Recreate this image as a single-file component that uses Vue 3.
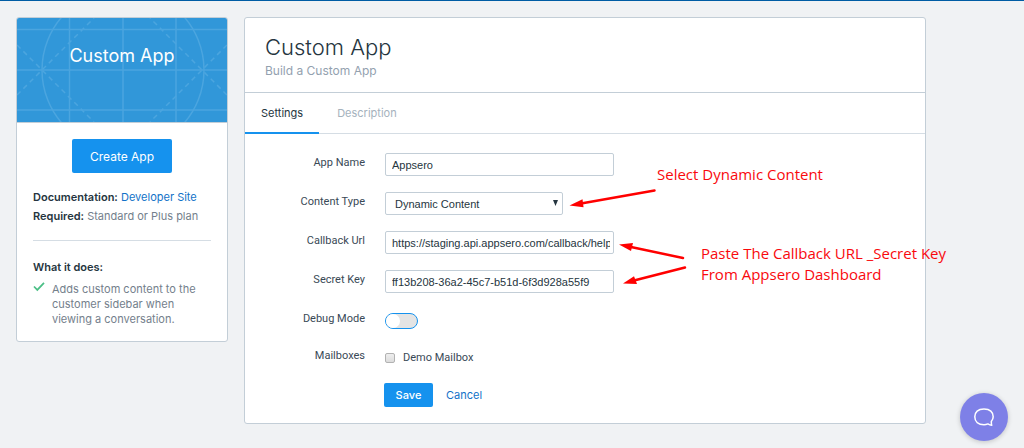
<script setup>
import { ref } from 'vue'

const appName = ref('Appsero')
const contentType = ref('Dynamic Content')
const callbackUrl = ref('https://staging.api.appsero.com/callback/helpscout')
const secretKey = ref('ff13b208-36a2-45c7-b51d-6f3d928a55f9')
const debug = ref(false)
const demoMailbox = ref(false)
</script>

<template>
  <div class="page">
    <aside class="card side">
      <div class="banner">
        <svg class="pattern" viewBox="0 0 210 104" preserveAspectRatio="xMidYMid slice" aria-hidden="true">
          <g fill="none" stroke="#4ba5df" stroke-width="1.5">
            <path d="M0 11.500H210M0 52H210M0 92H210M52.500 0V104M106 0V104M159 0V104" />
            <circle cx="106" cy="52" r="81" />
            <g stroke-dasharray="5 4">
              <path d="M0 27L77 104M0 77L77 0M210 27L133 104M210 77L133 0" />
            </g>
          </g>
        </svg>
        <h2>Custom App</h2>
      </div>
      <div class="side-body">
        <button type="button" class="btn create">Create App</button>
        <p class="meta"><b>Documentation:</b> <a href="#docs">Developer Site</a></p>
        <p class="meta"><b>Required:</b> Standard or Plus plan</p>
        <hr />
        <h3>What it does:</h3>
        <ul>
          <li>
            <svg width="12" height="10" viewBox="0 0 12 10" aria-hidden="true">
              <path d="M1 4.500L4.300 7.900L11 0.800" fill="none" stroke="#4bbf86" stroke-width="1.700" />
            </svg>
            <span>Adds custom content to the customer sidebar when viewing a conversation.</span>
          </li>
        </ul>
      </div>
    </aside>

    <main class="card main">
      <header>
        <h1>Custom App</h1>
        <p>Build a Custom App</p>
      </header>
      <nav class="tabs">
        <a href="#settings" class="tab active">Settings</a>
        <a href="#description" class="tab">Description</a>
      </nav>
      <form @submit.prevent>
        <div class="row">
          <label for="name">App Name</label>
          <input id="name" v-model="appName" class="field" type="text" />
        </div>
        <div class="row">
          <label for="type">Content Type</label>
          <div class="select">
            <select id="type" v-model="contentType" class="field">
              <option>Dynamic Content</option>
              <option>Static Content</option>
            </select>
            <svg class="caret" width="5" height="6" viewBox="0 0 5 6" aria-hidden="true">
              <path d="M0 0H5L2.500 6Z" fill="#253540" />
            </svg>
          </div>
        </div>
        <div class="row">
          <label for="url">Callback Url</label>
          <input id="url" v-model="callbackUrl" class="field" type="text" />
        </div>
        <div class="row">
          <label for="key">Secret Key</label>
          <input id="key" v-model="secretKey" class="field" type="text" />
        </div>
        <div class="row">
          <label for="debug">Debug Mode</label>
          <input id="debug" v-model="debug" class="toggle" type="checkbox" />
        </div>
        <div class="row mailboxes">
          <span class="label">Mailboxes</span>
          <label class="option"><input v-model="demoMailbox" type="checkbox" />Demo Mailbox</label>
        </div>
        <div class="actions">
          <button type="submit" class="btn save">Save</button>
          <a href="#cancel">Cancel</a>
        </div>
      </form>

      <svg class="arrows" width="210" height="110" viewBox="480 185 210 110" aria-hidden="true">
        <g stroke="#f00" stroke-width="2.500" stroke-linecap="round">
          <path d="M654.500 190.500L581 203.500" />
          <path d="M683 258L631 247" />
          <path d="M685 267.500L634 280.500" />
        </g>
        <g fill="#f00">
          <path d="M569.500 205.500L582.500 199.200L583.500 207.300Z" />
          <path d="M619 244.500L633 243L631 251Z" />
          <path d="M623 283.500L634 276.300L637 284Z" />
        </g>
      </svg>
      <p class="note note-type">Select Dynamic Content</p>
      <p class="note note-keys">Paste The Callback URL _Secret Key<br />From Appsero Dashboard</p>
    </main>

    <button type="button" class="chat" aria-label="Open chat">
      <svg width="22" height="22" viewBox="0 0 22 22" aria-hidden="true">
        <path d="M18.800 19.300C18.300 18.500 18.300 17 18.300 15.500C19.600 14 20.200 12.300 20.200 10.800C20.200 5.900 17 3 11 3S1.800 5.900 1.800 10.800S5.300 18.700 11 18.700C12.600 18.700 13.700 18.400 14.900 17.900C16.100 18.700 17.400 19.200 18.800 19.300Z" fill="none" stroke="#fff" stroke-width="1.500" stroke-linejoin="round" />
      </svg>
    </button>
  </div>
</template>

<style>
body {
  margin: 0;
  background: #f0f2f4;
}
</style>

<style scoped>
* {
  box-sizing: border-box;
}
.page {
  min-height: 100vh;
  display: flex;
  align-items: flex-start;
  gap: 16px;
  padding: 16px 98px 24px 16px;
  border-top: 1px solid #005ca4;
  color: #253540;
  font: 11px/15px Inter, "Liberation Sans", sans-serif;
}
h1, h2, h3, p, ul {
  margin: 0;
  padding: 0;
}
a {
  color: #1272c8;
  text-decoration: none;
}
.card {
  background: #fff;
  border: 1px solid #c3ced7;
  border-radius: 3px;
}
.side {
  flex: 0 0 212px;
}
.banner {
  position: relative;
  height: 105px;
  overflow: hidden;
  border-radius: 2px 2px 0 0;
  border-bottom: 1px solid #c3ced7;
  background: #3197d9;
  text-align: center;
}
.pattern {
  position: absolute;
  inset: 0;
  width: 100%;
  height: 100%;
}
h2 {
  position: relative;
  padding-top: 25px;
  color: #fff;
  font-size: 18px;
  line-height: 26px;
  font-weight: 400;
}
.side-body {
  padding: 16px 16px 14px;
}
.btn {
  display: block;
  border: 0;
  border-radius: 2px;
  background: #1592ee;
  color: #fff;
  font-family: inherit;
}
.create {
  margin: 0 auto 15px;
  width: 100px;
  height: 34px;
  font-size: 12px;
}
.meta {
  line-height: 19px;
  color: #74808c;
}
.meta b {
  color: #253540;
  font-weight: 600;
}
hr {
  margin: 14px 0 19px;
  border: 0;
  border-top: 1px solid #d5dde4;
}
h3 {
  font-size: 11px;
  line-height: 15px;
  font-weight: 600;
}
ul {
  margin-top: 7px;
  list-style: none;
}
li {
  display: flex;
  gap: 7px;
  line-height: 15px;
  color: #74808c;
}
li svg {
  flex: none;
}
.main {
  position: relative;
  flex: 1;
}
header {
  padding: 16px 20px 12px;
  border-bottom: 1px solid #c3ced7;
}
h1 {
  font-size: 22px;
  line-height: 27px;
  font-weight: 300;
}
header p {
  font-size: 12px;
  line-height: 19px;
  color: #93a1af;
}
.tabs {
  display: flex;
  height: 41px;
  border-bottom: 1px solid #d5dde4;
}
.tab {
  height: 41px;
  padding: 0 18px;
  color: #a5b2bd;
  line-height: 40px;
}
.tab.active {
  padding: 0 16px;
  border-bottom: 2px solid #1592ee;
  color: #253540;
}
form {
  padding: 19px 16px 16px 0;
  font-family: Roboto, "Liberation Sans", sans-serif;
}
.row {
  display: grid;
  grid-template-columns: 120px 229px;
  column-gap: 20px;
  align-items: center;
  height: 23px;
  margin-bottom: 16px;
}
.row > label:first-child,
.label {
  padding-bottom: 4px;
  text-align: right;
  color: #394956;
}
.field {
  display: block;
  width: 100%;
  height: 23px;
  margin: 0;
  padding: 0 3px 0 6px;
  border: 1px solid #c3ced7;
  border-radius: 2px;
  background: #fff;
  color: #253540;
  font: 11px "Liberation Sans", sans-serif;
}
.select {
  position: relative;
  width: 178px;
}
.select .field {
  appearance: none;
  padding: 0 9px;
}
.caret {
  position: absolute;
  right: 5px;
  top: 8px;
  pointer-events: none;
}
.toggle {
  appearance: none;
  display: flex;
  width: 33px;
  height: 16px;
  margin: 0;
  border: 1px solid #1592ee;
  border-radius: 8px;
  background: #e4e4e4;
}
.toggle::before {
  content: "";
  width: 14px;
  height: 14px;
  border-radius: 50%;
  background: #fff;
}
.toggle:checked::before {
  margin-left: auto;
}
.row.mailboxes {
  margin: -2px 0 14px;
}
.option {
  display: flex;
  align-items: center;
  gap: 8px;
  color: #394956;
}
.option input {
  appearance: none;
  width: 10px;
  height: 10px;
  margin: 0;
  border: 1px solid #b2b2b2;
  border-radius: 2px;
  background: linear-gradient(#eee, #dcdcdc);
}
.option input:checked {
  background: #1592ee;
}
.actions {
  display: flex;
  align-items: center;
  gap: 13px;
  margin-left: 139px;
  font-family: Inter, sans-serif;
}
.save {
  width: 49px;
  height: 24px;
  font-size: 11px;
  font-weight: 500;
}
.arrows {
  position: absolute;
  left: 235px;
  top: 167px;
}
.note {
  position: absolute;
  color: #f9090d;
  font: 15px/21px "Open Sans", sans-serif;
  white-space: nowrap;
}
.note-type {
  left: 412px;
  top: 146px;
}
.note-keys {
  left: 456px;
  top: 225px;
}
.chat {
  position: fixed;
  right: 16px;
  bottom: 7px;
  display: grid;
  place-items: center;
  width: 48px;
  height: 48px;
  padding: 0;
  border: 0;
  border-radius: 50%;
  background: #7e80e7;
  box-shadow: 0 1px 5px #0003;
}
</style>
